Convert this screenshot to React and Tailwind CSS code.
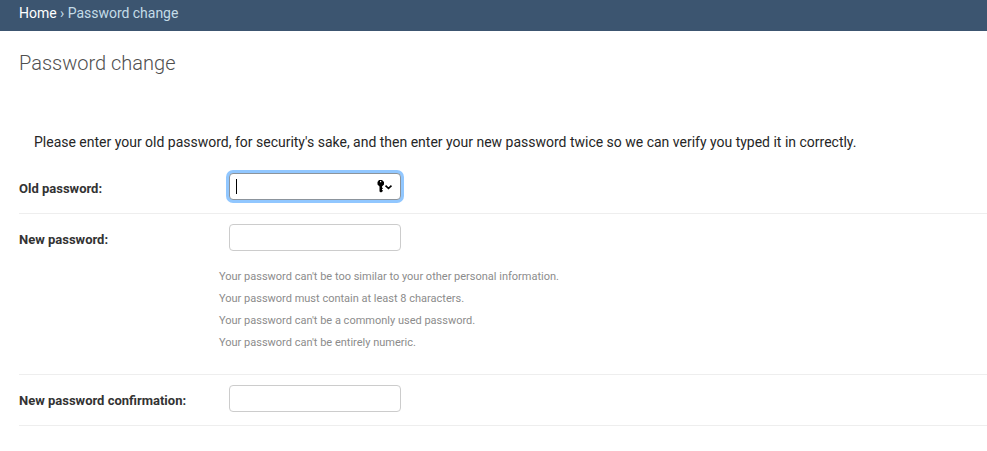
const help = [
  "Your password can't be too similar to your other personal information.",
  "Your password must contain at least 8 characters.",
  "Your password can't be a commonly used password.",
  "Your password can't be entirely numeric.",
];

function Label({ children }) {
  return <span className="w-[210px] shrink-0 pt-[8px] text-[13px] leading-4 font-bold text-[#333]">{children}</span>;
}

function Field({ children, focused }) {
  return (
    <div
      className={
        "flex h-[27px] w-[172px] items-center rounded-[4px] border bg-white " +
        (focused ? "border-[#8c949c] shadow-[0_0_0_3px_#91c7ff]" : "border-[#ccc]")
      }
    >
      {children}
    </div>
  );
}

export default function App() {
  return (
    <div className="h-[451px] w-[987px] overflow-hidden bg-white font-[Roboto,sans-serif]">
      <header className="flex h-[31px] items-center bg-[#3c5570] px-[19px] pb-[5px] text-[14px] leading-4 tracking-[-0.02px] text-[#c4dce8]">
        <span className="whitespace-pre"><span className="text-white">Home</span> › Password change</span>
      </header>
      <main className="pl-[19px]">
        <h1 className="pt-[20px] text-[20px] leading-6 font-light text-[#4f4f4f]">Password change</h1>
        <p className="mt-[57px] pl-[15px] text-[14px] leading-5 tracking-[-0.006px] text-[#262626]">
          Please enter your old password, for security's sake, and then enter your new password twice so we can verify you typed it in correctly.
        </p>
        <div className="mt-[21px] flex h-[41px] border-b border-[#eee]">
          <Label>Old password:</Label>
          <Field focused>
            <span className="ml-[6px] h-[15px] w-px bg-black" />
            <svg className="mr-[7px] ml-auto" width="17" height="13" viewBox="0 0 17 13">
              <path fillRule="evenodd" d="M3 0h3l2 2v2.5L6 6.5v1.2h.7v1.3H6v1h.7v1.2L5 12.4 3.5 11.5v-5l-2-2V2L3 0Zm1 1v1.2h1.2V1H4Z" />
              <path d="m9.5 5.7 3 2.7 3-2.7" fill="none" stroke="black" strokeWidth="1.6" />
            </svg>
          </Field>
        </div>
        <div className="flex h-[161px] border-b border-[#eee] pt-[10px]">
          <Label>New password:</Label>
          <div>
            <Field />
            <ul className="mt-[15px] -ml-[10px] text-[11px] leading-[22px] text-[#8c8c8c]">
              {help.map((text) => <li key={text}>{text}</li>)}
            </ul>
          </div>
        </div>
        <div className="flex h-[51px] border-b border-[#eee] pt-[10px]">
          <Label>New password confirmation:</Label>
          <Field />
        </div>
      </main>
    </div>
  );
}
